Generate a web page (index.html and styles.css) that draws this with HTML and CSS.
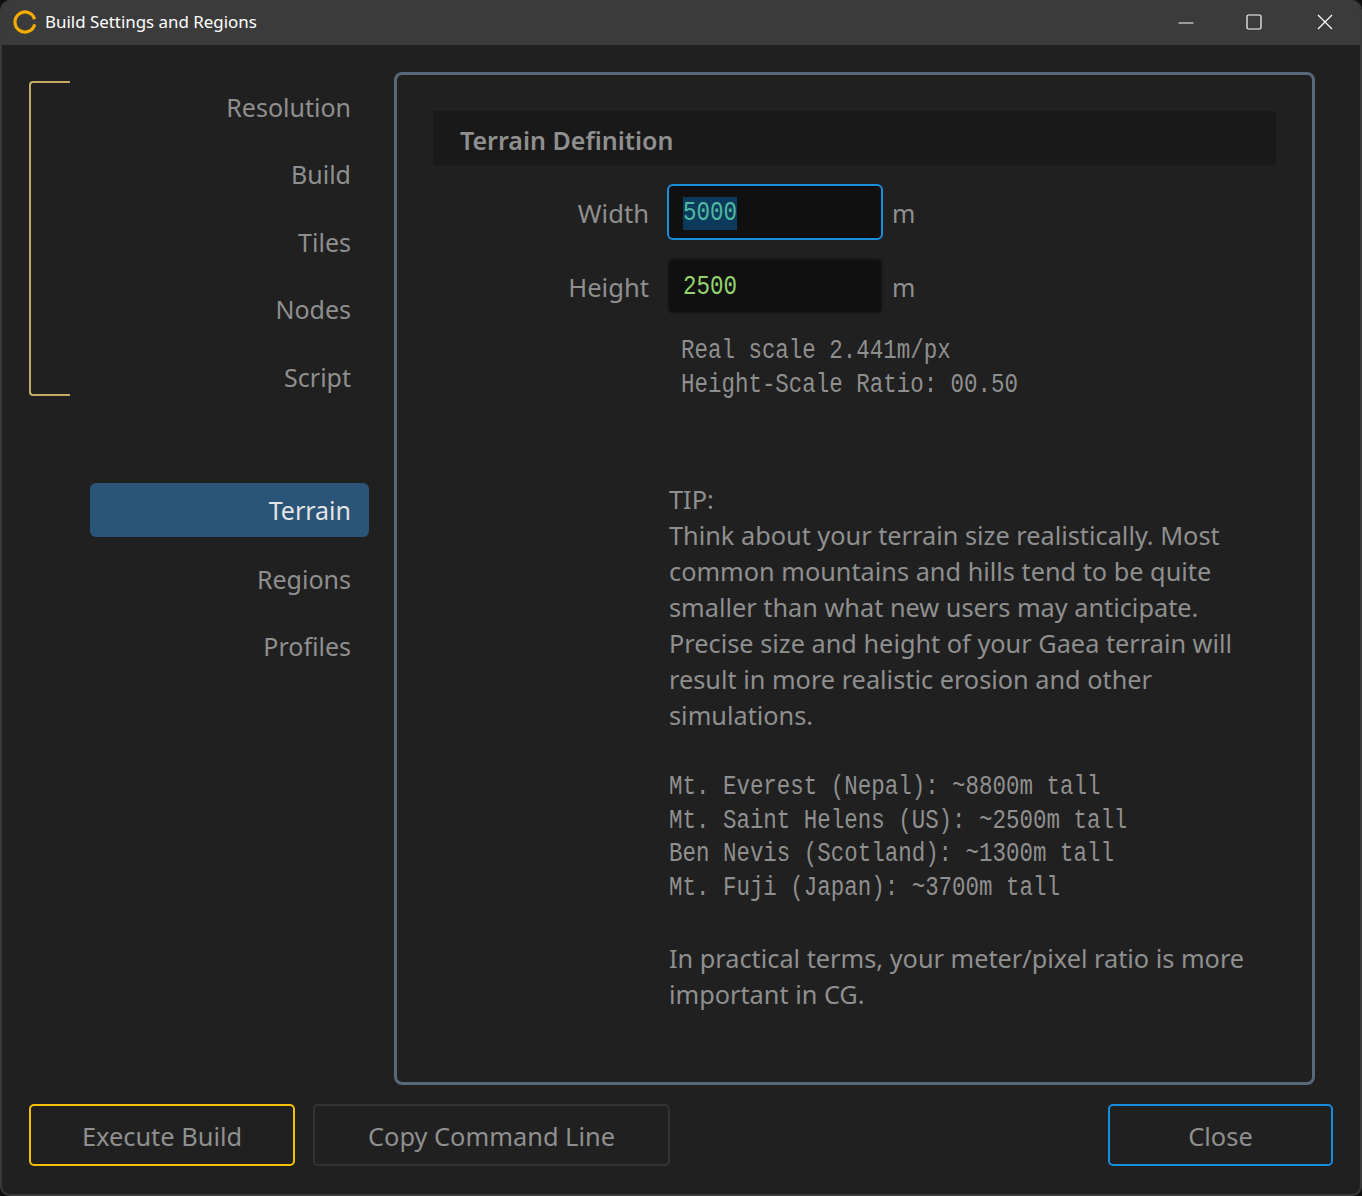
FILE: index.html
```html
<!DOCTYPE html>
<html lang="en">
<head>
    <meta charset="UTF-8">
    <meta name="viewport" content="width=device-width, initial-scale=1.0">
    <title>Build Settings and Regions</title>
    <link rel="stylesheet" href="styles.css">
</head>
<body>
    <div class="window">
        <!-- Title bar -->
        <div class="titlebar">
            <svg class="app-icon" width="24" height="24" viewBox="0 0 24 24">
                <path d="M21.7 14.4A10 10 0 1 1 21.6 9.3" fill="none" stroke="#f5ad00" stroke-width="3.2"/>
            </svg>
            <span class="title">Build Settings and Regions</span>
            <div class="controls">
                <svg class="ctl-min" width="16" height="16" viewBox="0 0 16 16"><path d="M0.5 8H15.5" stroke="#fff" fill="none"/></svg>
                <svg class="ctl-max" width="16" height="16" viewBox="0 0 16 16"><rect x="1" y="1" width="14" height="14" rx="1.5" stroke="#fff" stroke-width="1.2" fill="none"/></svg>
                <svg class="ctl-close" width="16" height="16" viewBox="0 0 16 16"><path d="M1 1L15 15M15 1L1 15" stroke="#fff" stroke-width="1.2" fill="none"/></svg>
            </div>
        </div>

        <div class="content">
            <!-- Sidebar -->
            <div class="sidebar">
                <div class="nav-group">
                    <div class="bracket"></div>
                    <div class="nav-list">
                        <div class="nav-item">Resolution</div>
                        <div class="nav-item">Build</div>
                        <div class="nav-item">Tiles</div>
                        <div class="nav-item">Nodes</div>
                        <div class="nav-item">Script</div>
                    </div>
                </div>
                <div class="nav-list nav-lower">
                    <div class="nav-item active">Terrain</div>
                    <div class="nav-item">Regions</div>
                    <div class="nav-item">Profiles</div>
                </div>
            </div>

            <!-- Terrain panel -->
            <div class="panel">
                <div class="panel-header">Terrain Definition</div>

                <div class="field">
                    <label class="field-label">Width</label>
                    <div class="field-input focused"><span class="mono-text selected">5000</span></div>
                    <span class="unit">m</span>
                </div>
                <div class="field">
                    <label class="field-label">Height</label>
                    <div class="field-input"><span class="mono-text">2500</span></div>
                    <span class="unit">m</span>
                </div>

                <div class="scale-info mono">
                    <div class="mono-text">Real scale 2.441m/px</div>
                    <div class="mono-text">Height-Scale Ratio: 00.50</div>
                </div>

                <div class="tip">
                    <p>TIP:<br>Think about your terrain size realistically. Most<br>common mountains and hills tend to be quite<br>smaller than what new users may anticipate.<br>Precise size and height of your Gaea terrain will<br>result in more realistic erosion and other<br>simulations.</p>
                    <div class="mono examples">
                        <div class="mono-text">Mt. Everest (Nepal): ~8800m tall</div>
                        <div class="mono-text">Mt. Saint Helens (US): ~2500m tall</div>
                        <div class="mono-text">Ben Nevis (Scotland): ~1300m tall</div>
                        <div class="mono-text">Mt. Fuji (Japan): ~3700m tall</div>
                    </div>
                    <p>In practical terms, your meter/pixel ratio is more<br>important in CG.</p>
                </div>
            </div>
        </div>

        <!-- Bottom buttons -->
        <div class="footer">
            <button class="btn btn-build">Execute Build</button>
            <button class="btn btn-copy">Copy Command Line</button>
            <button class="btn btn-close">Close</button>
        </div>
    </div>
</body>
</html>
```

FILE: styles.css
```css
/* Basic Styles */
html, body {
    margin: 0;
    padding: 0;
    background-color: #101010;
}

body {
    font-family: "Noto Sans", "Open Sans", sans-serif;
    font-size: 25px;
    color: #8f8f8f;
}

.window {
    width: 1362px;
    height: 1196px;
    box-sizing: border-box;
    background-color: #202020;
    border: 2px solid #3a3a3a;
    border-top: none;
    border-radius: 10px;
    display: flex;
    flex-direction: column;
    overflow: hidden;
}

/* Title bar */
.titlebar {
    height: 45px;
    flex: none;
    background-color: #3b3b3b;
    display: flex;
    align-items: center;
    padding-left: 11px;
}

.app-icon {
    margin-right: 8px;
    margin-top: -2px;
}

.title {
    color: #fff;
    font-size: 16.9px;
    margin-top: -2px;
}

.controls {
    margin-left: auto;
    margin-right: 27px;
    display: flex;
}

.ctl-max {
    margin-left: 52px;
    margin-top: -1px;
}

.ctl-close {
    margin-left: 55px;
    margin-top: -1px;
}

/* Main area */
.content {
    flex: none;
    display: flex;
    height: 1040px;
    padding-top: 27px;
    box-sizing: border-box;
}

.sidebar {
    width: 392px;
    flex: none;
    padding-left: 27px;
    box-sizing: border-box;
}

.nav-group {
    display: flex;
    margin-top: 8.75px;
}

.bracket {
    width: 39px;
    height: 311px;
    border: 2px solid #c4a962;
    border-right: none;
    border-radius: 4px 0 0 4px;
}

.nav-list {
    width: 279px;
    margin-left: 20px;
    display: flex;
    flex-direction: column;
    gap: 13.5px;
}

.nav-lower {
    margin-left: 61px;
    margin-top: 78.25px;
}

.nav-item {
    height: 54px;
    line-height: 52px;
    padding-right: 18px;
    text-align: right;
    border-radius: 6px;
}

.nav-lower .nav-item {
    line-height: 56px;
}

.nav-lower .nav-item.active {
    background-color: #2a5478;
    color: #e4e4e4;
    line-height: 54px;
}

/* Panel */
.panel {
    width: 921px;
    height: 1013px;
    box-sizing: border-box;
    border: 3px solid #56697a;
    border-radius: 8px;
    padding: 36px;
}

.panel-header {
    height: 54px;
    line-height: 58px;
    background-color: #191919;
    padding-left: 27px;
    font-weight: 600;
    margin-bottom: 19px;
}

.field {
    display: flex;
    align-items: center;
    height: 56px;
    margin-bottom: 18px;
}

.field-label {
    width: 216px;
    text-align: right;
    margin-right: 18px;
    padding-top: 2px;
    font-size: 25.6px;
}

.field-input {
    width: 216px;
    height: 56px;
    box-sizing: border-box;
    background-color: #101010;
    border: 2px solid #191919;
    border-radius: 6px;
    padding-left: 14px;
    font-family: "Liberation Mono", monospace;
    font-size: 27px;
    line-height: 54px;
    color: #93d36d;
}

.field-input.focused {
    border-color: #1a8fe0;
    color: #50b8a0;
}

.selected {
    background-color: #0b3a5c;
    line-height: 33px;
}

.unit {
    margin-left: 9px;
    padding-top: 2px;
}

/* The monospace text in the reference is tall and narrow */
.mono {
    font-family: "Liberation Mono", monospace;
    font-size: 27px;
}

.mono-text {
    display: inline-block;
    white-space: pre;
    transform: scaleX(0.832);
    transform-origin: left center;
}

.mono .mono-text {
    display: block;
}

.scale-info {
    margin-left: 248px;
    margin-top: 20px;
    line-height: 34px;
}

.tip {
    margin-left: 236px;
    margin-top: 79px;
    font-size: 25.3px;
    line-height: 36px;
}

.tip p {
    margin: 0;
}

.examples {
    line-height: 33.7px;
    margin: 38px 0 34px;
}

/* Footer buttons */
.footer {
    flex: none;
    display: flex;
    padding-left: 27px;
    padding-right: 27px;
    padding-top: 19px;
}

.btn {
    height: 62px;
    background-color: transparent;
    border: 2px solid #333;
    border-radius: 5px;
    color: #8f8f8f;
    font-family: "Noto Sans", "Open Sans", sans-serif;
    font-size: 25.4px;
    padding-top: 2px;
}

.btn-build {
    width: 266px;
    border-color: #f5c000;
    margin-right: 18px;
}

.btn-copy {
    width: 357px;
}

.btn-close {
    width: 225px;
    margin-left: auto;
    border-color: #168ce0;
}
```
